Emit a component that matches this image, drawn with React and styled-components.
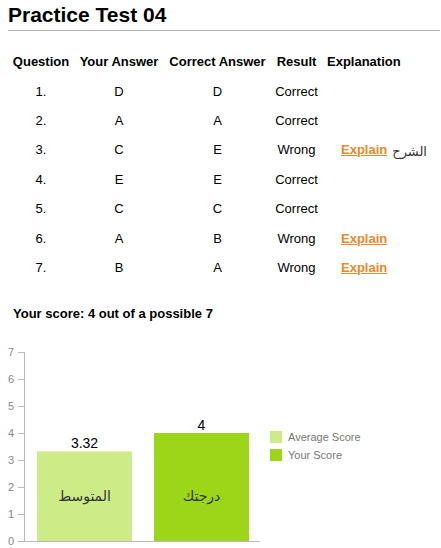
import React from 'react';
import styled, { createGlobalStyle } from 'styled-components';

const GlobalStyle = createGlobalStyle`
	body {
		margin: 0;
		background: #fff;
		font-family: Arial, "Liberation Sans", sans-serif;
		color: #000;
	}
`;

const rows = [
	{ n: '1.', yours: 'D', correct: 'D', result: 'Correct' },
	{ n: '2.', yours: 'A', correct: 'A', result: 'Correct' },
	{ n: '3.', yours: 'C', correct: 'E', result: 'Wrong', explain: true, note: 'الشرح' },
	{ n: '4.', yours: 'E', correct: 'E', result: 'Correct' },
	{ n: '5.', yours: 'C', correct: 'C', result: 'Correct' },
	{ n: '6.', yours: 'A', correct: 'B', result: 'Wrong', explain: true },
	{ n: '7.', yours: 'B', correct: 'A', result: 'Wrong', explain: true },
];

const bars = [
	{ value: 3.32, label: '3.32', name: 'المتوسط', color: '#cdeb87', x: 37 },
	{ value: 4, label: '4', name: 'درجتك', color: '#9bd619', x: 154 },
];

const Chart = () => {
	const unit = 27;
	return (
		<svg width="262" height="203" viewBox="0 345 262 203">
			{[0, 1, 2, 3, 4, 5, 6, 7].map((t) => (
				<g key={t}>
					<text
						x="14"
						y={541 - t * unit + 4}
						textAnchor="end"
						fontSize="11"
						fill="#888"
						fontFamily="Arial, 'Liberation Sans', sans-serif"
					>
						{t}
					</text>
					<line x1="18" x2="24" y1={541 - t * unit + 0.5} y2={541 - t * unit + 0.5} stroke="#bbb" />
				</g>
			))}
			<line x1="24.5" x2="24.5" y1="352" y2="541" stroke="#bbb" />
			{bars.map((b) => {
				const h = b.value * unit;
				return (
					<g key={b.label}>
						<rect x={b.x} y={541 - h} width="95" height={h} fill={b.color} />
						<text
							x={b.x + 47.5}
							y={541 - h - 3}
							textAnchor="middle"
							fontSize="14"
							fill="#000"
							fontFamily="Arial, 'Liberation Sans', sans-serif"
						>
							{b.label}
						</text>
						<text
							x={b.x + 47.5}
							y="501"
							textAnchor="middle"
							fontSize="14"
							fill="#333"
							fontFamily="'DejaVu Sans', 'Noto Sans', sans-serif"
						>
							{b.name}
						</text>
					</g>
				);
			})}
			<line x1="24" x2="260" y1="541.5" y2="541.5" stroke="#bbb" />
		</svg>
	);
};

export default function App() {
	return (
		<Page>
			<GlobalStyle />
			<Title>Practice Test 04</Title>
			<Rule />
			<Grid>
				<Head>Question</Head>
				<Head>Your Answer</Head>
				<Head>Correct Answer</Head>
				<Head>Result</Head>
				<Head $left>Explanation</Head>
				{rows.map((r) => (
					<React.Fragment key={r.n}>
						<Cell>{r.n}</Cell>
						<Cell>{r.yours}</Cell>
						<Cell>{r.correct}</Cell>
						<Cell>{r.result}</Cell>
						<ExplainCell>
							{r.explain && <ExplainLink href="#">Explain</ExplainLink>}
							{r.note && <Note>{r.note}</Note>}
						</ExplainCell>
					</React.Fragment>
				))}
			</Grid>
			<Score>Your score: 4 out of a possible 7</Score>
			<ChartRow>
				<Chart />
				<Legend>
					<LegendItem>
						<Swatch $color="#cdeb87" />
						Average Score
					</LegendItem>
					<LegendItem>
						<Swatch $color="#9bd619" />
						Your Score
					</LegendItem>
				</Legend>
			</ChartRow>
		</Page>
	);
}

const Page = styled.div`
	width: 441px;
	height: 548px;
	overflow: hidden;
	box-sizing: border-box;
`;

const Title = styled.h1`
	margin: 0;
	padding: 3px 0 0 8px;
	font-size: 21px;
	line-height: 24px;
	font-weight: bold;
`;

const Rule = styled.div`
	margin: 3px 1px 0 8px;
	height: 1px;
	background: #b4b4b4;
`;

const Grid = styled.div`
	display: grid;
	grid-template-columns: 56px 78px 97px 39px auto;
	grid-auto-rows: 29.4px;
	column-gap: 11px;
	margin: 16px 0 0 13px;
	font-size: 13px;
`;

const Head = styled.div`
	display: flex;
	align-items: center;
	justify-content: ${(p) => (p.$left ? 'flex-start' : 'center')};
	font-weight: bold;
	white-space: nowrap;
`;

const Cell = styled.div`
	display: flex;
	align-items: center;
	justify-content: center;
	white-space: nowrap;
`;

const ExplainCell = styled.div`
	display: flex;
	align-items: center;
	gap: 5px;
	padding-left: 14px;
	white-space: nowrap;
`;

const ExplainLink = styled.a`
	color: #e8892a;
	font-weight: bold;
	text-decoration: underline;
`;

const Note = styled.span`
	font-family: 'DejaVu Sans', 'Noto Sans', sans-serif;
	font-size: 13px;
	color: #333;
	margin-top: 3px;
`;

const Score = styled.div`
	margin: 24px 0 0 13px;
	font-size: 13px;
	font-weight: bold;
	line-height: 16px;
`;

const ChartRow = styled.div`
	display: flex;
	align-items: flex-start;
	margin-top: 23px;
`;

const Legend = styled.div`
	display: flex;
	flex-direction: column;
	gap: 6px;
	margin: 86px 0 0 8px;
`;

const LegendItem = styled.div`
	display: flex;
	align-items: center;
	gap: 6px;
	font-size: 11px;
	color: #777;
	line-height: 12px;
`;

const Swatch = styled.span`
	width: 12px;
	height: 12px;
	background: ${(p) => p.$color};
`;
